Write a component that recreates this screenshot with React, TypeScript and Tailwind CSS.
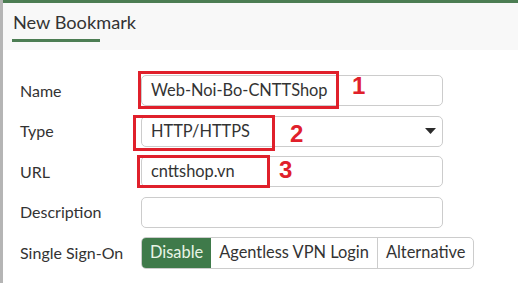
import type { ReactNode } from 'react';

const font = { fontFamily: 'Lato, "Open Sans", sans-serif' };

function Row({ label, children }: { label: string; children: ReactNode }) {
  return (
    <div className="flex items-center h-[31px]">
      <div className="w-[121px] shrink-0 text-[16px] text-[#333]">{label}</div>
      {children}
    </div>
  );
}

function Mark({ n, className }: { n: string; className: string }) {
  return (
    <span
      className={`absolute text-[24px] font-bold leading-none text-[#e0202b] ${className}`}
      style={{ fontFamily: '"Liberation Sans", Arial, sans-serif' }}
    >
      {n}
    </span>
  );
}

export default function App() {
  return (
    <div className="w-[518px] h-[283px] overflow-hidden bg-white border-l-[3px] border-[#b5b5b5]" style={font}>
      <div className="h-[3px] bg-[#4c7d53]" />
      <div className="h-[47px] bg-[#f8f8f8] pl-[9px] pt-[8px]">
        <div className="text-[18.2px] text-[#333] leading-[23px] pl-px">New Bookmark</div>
        <div className="mt-[5px] w-[88px] h-[3px] bg-[#4c7d53]" />
      </div>
      <div className="pl-[17px] pt-[25px] flex flex-col gap-[9.5px]">
        <Row label="Name">
          <div className="relative">
            <div className="w-[302px] h-[31px] rounded-[5px] border border-[#ccc] flex items-center pl-[9px] text-[16.4px] text-[#333]">
              Web-Noi-Bo-CNTTShop
            </div>
            <div className="absolute left-[-3px] top-[-4px] w-[201px] h-[38px] border-[3px] border-[#e0202b]" />
            <Mark n="1" className="left-[211px] top-[-1px]" />
          </div>
        </Row>
        <Row label="Type">
          <div className="relative">
            <div className="w-[302px] h-[31px] rounded-[5px] border border-[#ccc] flex items-center justify-between pl-[9px] pr-[6px] text-[16.4px] text-[#333]">
              HTTP/HTTPS
              <svg width="11" height="6" viewBox="0 0 11 6">
                <path d="M0 0h11L5.5 6z" fill="#2b2b2b" />
              </svg>
            </div>
            <div className="absolute left-[-8px] top-[-1px] w-[142px] h-[36px] border-[3px] border-[#e0202b]" />
            <Mark n="2" className="left-[149px] top-[6px]" />
          </div>
        </Row>
        <Row label="URL">
          <div className="relative">
            <div className="w-[302px] h-[31px] rounded-[5px] border border-[#ccc] flex items-center pl-[9px] text-[16.4px] text-[#333]">
              cnttshop.vn
            </div>
            <div className="absolute left-[-4px] top-[-1px] w-[133px] h-[33px] border-[3px] border-[#e0202b]" />
            <Mark n="3" className="left-[138px] top-[2px]" />
          </div>
        </Row>
        <Row label="Description">
          <div className="w-[302px] h-[31px] rounded-[5px] border border-[#ccc]" />
        </Row>
        <Row label="Single Sign-On">
          <div className="flex h-[32px] rounded-[5px] border border-[#ccc] text-[16.4px] text-[#333] overflow-hidden">
            <div className="bg-[#3f7a4a] text-[#e9f5e6] px-[8px] flex items-center">Disable</div>
            <div className="px-[8px] flex items-center border-r border-[#ccc]">Agentless VPN Login</div>
            <div className="px-[8px] flex items-center">Alternative</div>
          </div>
        </Row>
      </div>
    </div>
  );
}
